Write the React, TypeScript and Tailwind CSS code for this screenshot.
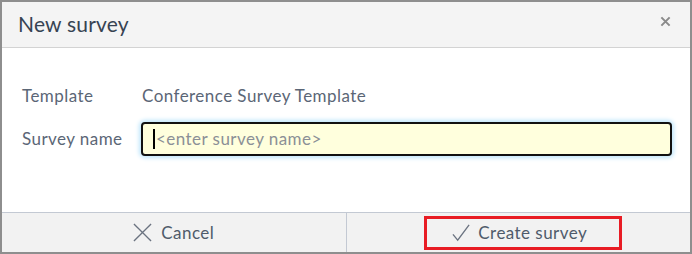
import React from "react";

export default function App() {
  return (
    <div
      className="w-[692px] h-[254px] bg-white border-2 border-[#8e8e8e] flex flex-col overflow-hidden"
      style={{ fontFamily: "Lato, 'Open Sans', sans-serif" }}
    >
      <div className="h-[46px] shrink-0 bg-[#f4f4f4] border-b border-[#d3d3d3] flex items-center justify-between pl-[16px] pr-[19px]">
        <span className="text-[21px] tracking-[0.2px] text-[#374352] leading-none mb-[2px]">New survey</span>
        <svg width="11" height="11" viewBox="0 0 12 12" className="mb-[6px]">
          <path d="M1.5 1.5 L10.5 10.5 M10.5 1.5 L1.5 10.5" stroke="#8a8a8a" strokeWidth="2.2" />
        </svg>
      </div>
      <div className="flex-1 flex flex-col pt-[36px] pl-[20px] pr-[18px] text-[17px] tracking-[0.45px]">
        <div className="flex items-center h-[24px] text-[#5b6676]">
          <span className="w-[120px]">Template</span>
          <span>Conference Survey Template</span>
        </div>
        <div className="flex items-center mt-[14px] text-[#5b6676]">
          <span className="w-[119px]">Survey name</span>
          <div className="flex-1 h-[34px] rounded-[4px] border-2 border-[#111] bg-[#ffffdd] shadow-[0_0_4px_2px_#bfe6fb] flex items-center pl-[10px]">
            <span className="w-[2px] h-[20px] bg-black mr-[1px]" />
            <span className="text-[#8b8f96]">&lt;enter survey name&gt;</span>
          </div>
        </div>
      </div>
      <div className="h-[40px] shrink-0 border-t border-[#c3c9d3] bg-[#f2f2f2] flex text-[17px] tracking-[0.45px] text-[#4f5b6b]">
        <div className="flex-1 flex items-center justify-center gap-[9px] border-r border-[#c3c9d3]">
          <svg width="19" height="19" viewBox="0 0 20 20">
            <path d="M1 1 L19 19 M19 1 L1 19" stroke="#6b7380" strokeWidth="1.4" />
          </svg>
          <span>Cancel</span>
        </div>
        <div className="flex-1 flex items-center justify-center">
          <div className="w-[198px] h-[34px] border-[3px] border-[#e81c24] flex items-center justify-center gap-[7px] ml-[10px] pr-[7px]">
            <svg width="19" height="19" viewBox="0 0 20 20">
              <path d="M1 12 L6 18 L18 2" stroke="#6b7380" strokeWidth="1.4" fill="none" />
            </svg>
            <span>Create survey</span>
          </div>
        </div>
      </div>
    </div>
  );
}
